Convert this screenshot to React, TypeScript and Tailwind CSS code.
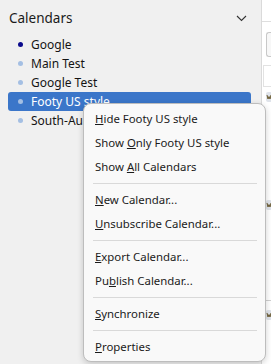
import React from "react";

const font = { fontFamily: '"Noto Sans", "Open Sans", sans-serif' };

function Item({ children }: { children: React.ReactNode }) {
  return (
    <div className="h-[24px] flex items-center pl-[11px] text-[11.4px] text-[#1b1b1b]">
      {children}
    </div>
  );
}

function Sep() {
  return (
    <div className="h-[9px] flex items-center pl-[9px] pr-[8px]">
      <div className="h-px w-full bg-[#d9d9d9]" />
    </div>
  );
}

const cals = [
  { name: "Google", color: "#0a0a8c", sel: false },
  { name: "Main Test", color: "#a4bfe3", sel: false },
  { name: "Google Test", color: "#a4bfe3", sel: false },
  { name: "Footy US style", color: "#a4bfe3", sel: true },
  { name: "South-Australia", color: "#a4bfe3", sel: false },
];

function WIcon() {
  return (
    <svg width="6" height="10" viewBox="0 0 6 10">
      <rect x="0" y="0" width="6" height="10" rx="2" fill="#dfe3ea" />
      <path d="M1 3 L2 7 L3 4.5 L4 7 L5 3" stroke="#6a5a30" strokeWidth="1" fill="none" />
    </svg>
  );
}

export default function App() {
  return (
    <div className="relative w-[271px] h-[364px] overflow-hidden flex bg-white" style={font}>
      <div className="w-[262px] h-full bg-[#f0f0f0] border-r border-[#dadada] shrink-0">
        <div className="h-[35px] flex items-center justify-between pl-[9px] pr-[14px]">
          <span className="text-[13.5px] text-[#1a1a1a] leading-none pt-[2px]">Calendars</span>
          <svg width="11" height="7" viewBox="0 0 11 7" className="mt-[2px]">
            <path d="M1 1 L5.5 5.5 L10 1" stroke="#333" strokeWidth="1.1" fill="none" />
          </svg>
        </div>
        <div className="flex flex-col">
          {cals.map((c) => (
            <div
              key={c.name}
              className={
                "h-[19px] mx-[8px] w-[243px] flex items-center rounded-[3px] " +
                (c.sel ? "bg-[#3b76c9] text-white" : "text-[#141414]")
              }
            >
              <span
                className="w-[5px] h-[5px] rounded-full ml-[10px] mr-[8px] shrink-0"
                style={{ background: c.color }}
              />
              <span className="text-[12px] leading-none whitespace-nowrap">{c.name}</span>
            </div>
          ))}
        </div>
      </div>
      <div className="flex-1 relative">
        <div className="h-[22px] border-b border-[#dedede]" />
        <div className="mt-[10px] ml-[4px] h-[25px] border border-[#c8c8c8] rounded-l-[3px] border-r-0 bg-[#f7f7f7]" />
        <div className="mt-[8px] h-[22px] border-t border-b border-l border-[#e2e2e2] ml-[1px]" />
        <div className="mt-[5px] ml-[4px]"><WIcon /></div>
        <div className="mt-[98px] ml-[4px]"><WIcon /></div>
        <div className="mt-[90px] border-t border-[#d0d0d0]" />
        <div className="mt-[9px] ml-[4px]"><WIcon /></div>
      </div>

      <div className="absolute left-[83px] top-[103px] w-[183px] h-[259px] bg-[#f9f9f9] border border-[#bdbdbd] rounded-[8px] shadow-[0_2px_6px_rgba(0,0,0,0.18)] pt-[3px] pb-[3px]">
        <Item><span><u>H</u>ide Footy US style</span></Item>
        <Item><span>Show <u>O</u>nly Footy US style</span></Item>
        <Item><span>Show <u>A</u>ll Calendars</span></Item>
        <Sep />
        <Item><span><u>N</u>ew Calendar...</span></Item>
        <Item><span><u>U</u>nsubscribe Calendar...</span></Item>
        <Sep />
        <Item><span><u>E</u>xport Calendar...</span></Item>
        <Item><span>Pu<u>b</u>lish Calendar...</span></Item>
        <Sep />
        <Item><span><u>S</u>ynchronize</span></Item>
        <Sep />
        <Item><span><u>P</u>roperties</span></Item>
      </div>
    </div>
  );
}
